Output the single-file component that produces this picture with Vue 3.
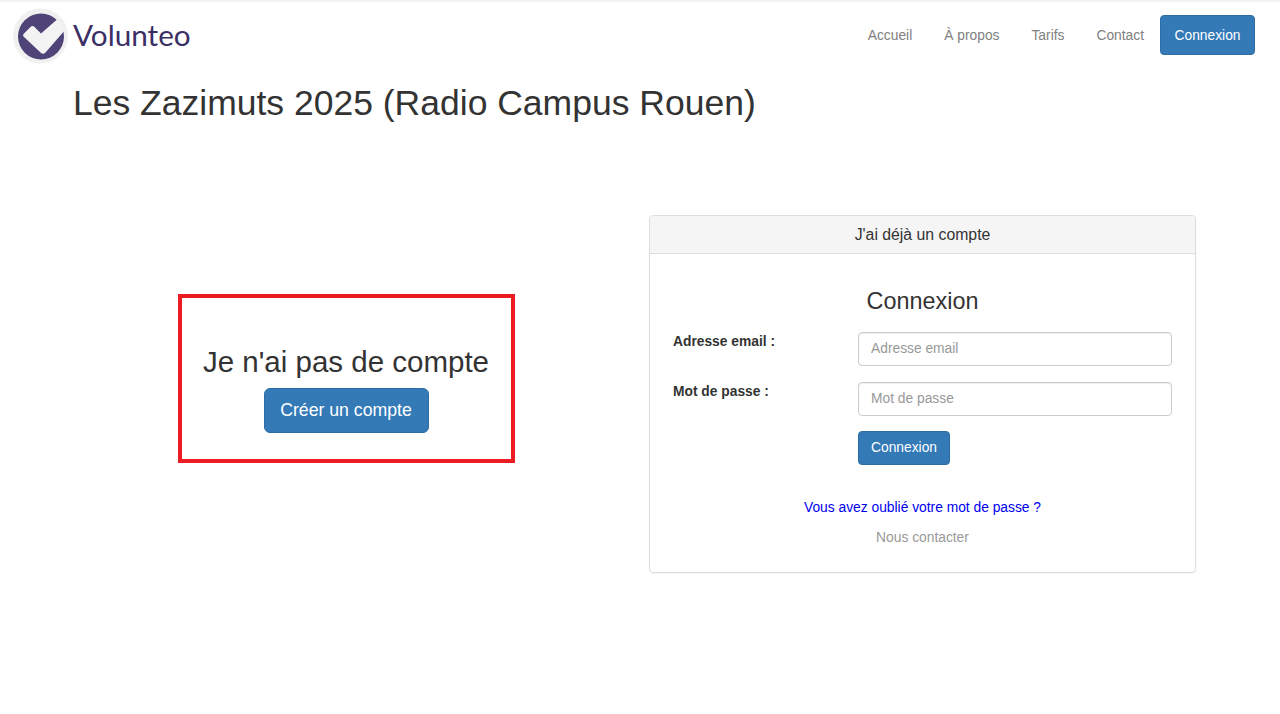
<script setup>
const links = ['Accueil', 'À propos', 'Tarifs', 'Contact']
</script>

<template>
  <div class="page">
    <header class="nav">
      <div class="brand">
        <svg class="logo" width="56" height="56" viewBox="0 0 56 56">
          <circle cx="27.5" cy="28" r="27.5" fill="#f0f0f1" />
          <circle cx="28" cy="28.5" r="23" fill="#4e4477" />
          <path d="M10.5 26 L18 18.5 Q19.5 17.5 21 18.5 L28 25.5 L44 11.5 Q50 15.5 52.5 21.5 L32.5 44.5 Q30 47 27.5 44.5 L10.5 28.5 Q9.5 27 10.5 26 Z" fill="#f3f3f3" />
        </svg>
        <span class="brand-name">Volunteo</span>
      </div>
      <nav class="links">
        <a v-for="l in links" :key="l" class="link">{{ l }}</a>
        <a class="btn nav-btn">Connexion</a>
      </nav>
    </header>

    <h1 class="title">Les Zazimuts 2025 (Radio Campus Rouen)</h1>

    <main class="row">
      <section class="left">
        <div class="box">
          <div class="box-title">Je n'ai pas de compte</div>
          <a class="btn big-btn">Créer un compte</a>
        </div>
      </section>

      <section class="card">
        <div class="card-head">J'ai déjà un compte</div>
        <div class="card-body">
          <h2 class="card-title">Connexion</h2>
          <div class="field">
            <label class="lbl">Adresse email :</label>
            <input class="input" type="text" placeholder="Adresse email" />
          </div>
          <div class="field">
            <label class="lbl">Mot de passe :</label>
            <input class="input" type="password" placeholder="Mot de passe" />
          </div>
          <div class="submit-row">
            <a class="btn submit">Connexion</a>
          </div>
          <a class="forgot">Vous avez oublié votre mot de passe ?</a>
          <a class="contact">Nous contacter</a>
        </div>
      </section>
    </main>
  </div>
</template>

<style>
html, body { margin: 0; background: #fff; }
</style>

<style scoped>
.page {
  height: 714px;
  box-sizing: border-box;
  border-top: 2px solid #f3f3f3;
  font-family: "Liberation Sans", Arial, sans-serif;
  font-size: 13.8px;
  color: #333;
  overflow: hidden;
}
.nav {
  display: flex;
  justify-content: space-between;
  align-items: flex-start;
  height: 68px;
  padding: 0 25px 0 13px;
}
.brand {
  display: flex;
  align-items: center;
  gap: 4px;
  margin-top: 6px;
}
.logo { display: block; }
.brand-name {
  font-family: Lato, sans-serif;
  font-size: 29.7px;
  line-height: 40px;
  color: #3b2f66;
  margin-top: -3px;
}
.links {
  display: flex;
  align-items: flex-start;
  margin-top: 13px;
}
.link {
  color: #808080;
  padding: 0 16px;
  line-height: 41px;
}
.btn {
  background: #337ab7;
  border: 1px solid #2e6da4;
  border-radius: 4px;
  color: #fff;
  text-align: center;
  box-sizing: border-box;
  display: block;
}
.nav-btn {
  width: 95px;
  height: 40px;
  line-height: 39px;
}
.title {
  margin: 0;
  padding-left: 73px;
  font-size: 35.5px;
  font-weight: 400;
  line-height: 40px;
  height: 145px;
  padding-top: 13px;
  box-sizing: border-box;
}
.row {
  display: flex;
  padding: 0 84px 0 58px;
  gap: 15px;
}
.left {
  width: 576px;
  display: flex;
  justify-content: center;
  align-items: flex-start;
}
.box {
  width: 337px;
  height: 169px;
  margin-top: 79px;
  border: 4px solid #ed1c24;
  box-sizing: border-box;
  display: flex;
  flex-direction: column;
  align-items: center;
  padding-top: 47px;
}
.box-title {
  font-size: 29.5px;
  line-height: 33px;
}
.big-btn {
  margin-top: 10px;
  width: 165px;
  height: 45px;
  font-size: 17.7px;
  line-height: 43px;
  border-radius: 6px;
}
.card {
  width: 547px;
  height: 358px;
  box-sizing: border-box;
  border: 1px solid #ddd;
  border-radius: 4px;
  box-shadow: 0 1px 1px rgba(0, 0, 0, .05);
}
.card-head {
  height: 38px;
  line-height: 37px;
  box-sizing: border-box;
  background: #f5f5f5;
  border-bottom: 1px solid #ddd;
  text-align: center;
  font-size: 15.8px;
  border-radius: 3px 3px 0 0;
}
.card-body {
  padding: 0 23px;
}
.card-title {
  margin: 0;
  padding-top: 34px;
  text-align: center;
  font-size: 23.4px;
  font-weight: 400;
  line-height: 26px;
  height: 78px;
  box-sizing: border-box;
}
.field {
  display: flex;
  height: 50px;
}
.lbl {
  width: 185px;
  font-weight: 700;
  line-height: 20px;
}
.input {
  width: 314px;
  height: 34px;
  box-sizing: border-box;
  border: 1px solid #ccc;
  border-radius: 4px;
  padding: 0 12px 2px;
  font: 13.8px "Liberation Sans", Arial, sans-serif;
  box-shadow: inset 0 1px 1px rgba(0, 0, 0, .075);
  outline: none;
}
.input::placeholder { color: #999; opacity: 1; }
.submit-row { padding-left: 185px; margin-top: -1px; }
.submit {
  width: 92px;
  height: 34px;
  line-height: 32px;
}
.forgot {
  display: block;
  margin-top: 33px;
  text-align: center;
  color: #0000ee;
  line-height: 20px;
}
.contact {
  display: block;
  margin-top: 10px;
  text-align: center;
  color: #999;
  line-height: 20px;
}
</style>
